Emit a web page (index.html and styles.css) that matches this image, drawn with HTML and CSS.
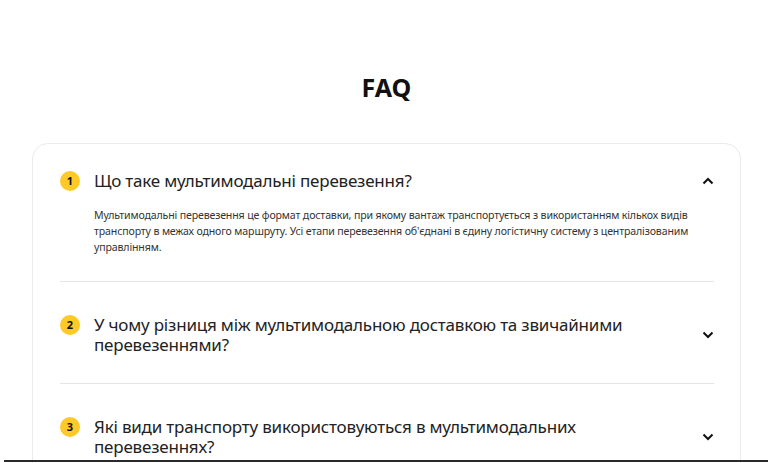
FILE: index.html
```html
<!DOCTYPE html>
<html lang="uk">
<head>
<meta charset="utf-8">
<title>FAQ</title>
<link rel="stylesheet" href="styles.css">
</head>
<body>
<main class="page">
  <h1 class="title">FAQ</h1>
  <section class="card">
    <div class="item open">
      <div class="q">
        <span class="badge">1</span>
        <span class="q-text">Що таке мультимодальні перевезення?</span>
        <svg class="chev" viewBox="0 0 12 8" width="12" height="8"><path d="M1.5 6.5 6 2l4.5 4.5" fill="none" stroke="#111" stroke-width="2"/></svg>
      </div>
      <p class="a">Мультимодальні перевезення це формат доставки, при якому вантаж транспортується з використанням кількох видів транспорту в межах одного маршруту. Усі етапи перевезення об'єднані в єдину логістичну систему з централізованим управлінням.</p>
    </div>
    <div class="item">
      <div class="q">
        <span class="badge">2</span>
        <span class="q-text">У чому різниця між мультимодальною доставкою та звичайними перевезеннями?</span>
        <svg class="chev" viewBox="0 0 12 8" width="12" height="8"><path d="M1.5 1.5 6 6l4.5-4.5" fill="none" stroke="#111" stroke-width="2"/></svg>
      </div>
    </div>
    <div class="item">
      <div class="q">
        <span class="badge">3</span>
        <span class="q-text">Які види транспорту використовуються в мультимодальних перевезеннях?</span>
        <svg class="chev" viewBox="0 0 12 8" width="12" height="8"><path d="M1.5 1.5 6 6l4.5-4.5" fill="none" stroke="#111" stroke-width="2"/></svg>
      </div>
    </div>
  </section>
</main>
<div class="bottom-line"></div>
</body>
</html>
```
FILE: styles.css
```css
html, body {
  margin: 0;
  padding: 0;
  background: #fff;
}
body {
  font-family: "Noto Sans", "Open Sans", sans-serif;
  color: #222;
  overflow: hidden;
  height: 463px;
}
.page {
  padding: 0 27px 0 32px;
}
.title {
  margin: 0;
  padding: 70px 0 39px;
  text-align: center;
  font-size: 25px;
  line-height: 34px;
  font-weight: 700;
  color: #111;
}
.card {
  border: 1px solid #ebebeb;
  border-radius: 16px;
  padding: 0 26px 0 27px;
}
.item {
  padding: 33px 0 27px;
  border-bottom: 1px solid #e5e5e5;
}
.item:first-child {
  padding-top: 27px;
  padding-bottom: 26px;
}
.item:last-child {
  border-bottom: none;
}
.q {
  display: flex;
  align-items: center;
}
.badge {
  flex: none;
  width: 20px;
  height: 20px;
  border-radius: 50%;
  background: #ffc928;
  color: #111;
  font-size: 11px;
  font-weight: 700;
  line-height: 20px;
  text-align: center;
  margin-right: 14px;
  align-self: flex-start;
}
.q-text {
  flex: none;
  width: 570px;
  font-size: 17px;
  letter-spacing: -0.2px;
  line-height: 20.5px;
  color: #222;
}
.chev {
  margin-left: auto;
  flex: none;
}
.a {
  margin: 15px 0 0 34px;
  font-size: 10.6px;
  letter-spacing: -0.15px;
  line-height: 16px;
  color: #333;
}
.bottom-line {
  position: fixed;
  left: 4px;
  right: 0;
  bottom: 1px;
  height: 2px;
  background: #2a2a2a;
}
```
